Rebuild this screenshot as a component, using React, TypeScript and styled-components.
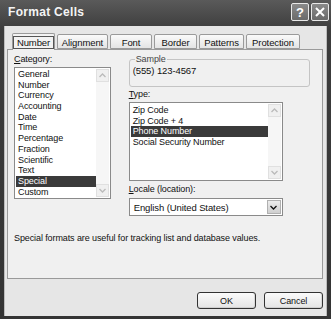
import styled, { createGlobalStyle } from 'styled-components';

const Global = createGlobalStyle`
	html, body {
		margin: 0;
		padding: 0;
		background: #3a3a3a;
	}
	body {
		font-family: "Liberation Sans", Arial, sans-serif;
		font-size: 9px;
		letter-spacing: -0.1px;
		color: #111;
	}
`;

const Window = styled.div`
	width: 331px;
	height: 319px;
	box-sizing: border-box;
	background: linear-gradient(#5a5a5a, #3c3c3c 30px, #343434);
	padding: 0 4px 3px 4px;
	display: flex;
	flex-direction: column;
`;

const TitleBar = styled.div`
	height: 26px;
	display: flex;
	align-items: center;
	justify-content: space-between;
	padding: 0 0 2px 4px;
	box-sizing: border-box;
`;

const Title = styled.span`
	color: #f4f4f4;
	font-weight: bold;
	font-size: 12px;
	letter-spacing: 0.3px;
`;

const TitleButtons = styled.div`
	display: flex;
	gap: 2px;
	margin-right: -2px;
`;

const TitleButton = styled.div`
	width: 16px;
	height: 16px;
	border: 1px solid #e8e8e8;
	border-radius: 2px;
	background: linear-gradient(#8a8a8a, #6a6a6a);
	color: #fff;
	font-weight: bold;
	font-size: 13px;
	display: flex;
	align-items: center;
	justify-content: center;
`;

const Body = styled.div`
	flex: 1;
	background: #e6e6e6;
	border-left: 1px solid #bcbcbc;
	border-right: 1px solid #bcbcbc;
	padding: 7px 3px 0 2px;
	display: flex;
	flex-direction: column;
`;

const Tabs = styled.div`
	display: flex;
	align-items: flex-end;
	padding-left: 5px;
	gap: 2px;
	height: 16px;
	position: relative;
	z-index: 1;
`;

const Tab = styled.div<{ $active?: boolean; $w: number }>`
	width: ${p => p.$w}px;
	height: ${p => (p.$active ? 17 : 15)}px;
	box-sizing: border-box;
	border: 1px solid #9a9a9a;
	border-bottom: ${p => (p.$active ? 'none' : '1px solid #9a9a9a')};
	background: ${p => (p.$active ? '#f2f2f2' : 'linear-gradient(#fafafa, #e4e4e4)')};
	border-radius: 2px 2px 0 0;
	display: flex;
	align-items: center;
	justify-content: center;
	padding-top: 1px;
	margin-bottom: ${p => (p.$active ? '-1px' : '0')};
	font-size: 9.5px;
`;

const Focus = styled.span`
	border: 1px solid #555;
	padding: 0 3px;
	line-height: 11px;
`;

const Panel = styled.div`
	height: 230px;
	box-sizing: border-box;
	border: 1px solid #9a9a9a;
	background: #f0f0f0;
	padding: 3px 0 0 6px;
	display: flex;
	flex-direction: column;
`;

const Columns = styled.div`
	display: flex;
	gap: 18px;
`;

const Column = styled.div<{ $w: number }>`
	width: ${p => p.$w}px;
	display: flex;
	flex-direction: column;
`;

const Label = styled.div<{ $gap?: number }>`
	line-height: 11px;
	margin-top: ${p => p.$gap ?? 0}px;
	margin-bottom: 2px;
	u {
		text-decoration: underline;
	}
`;

const ListBox = styled.div<{ $h: number; $w?: number }>`
	height: ${p => p.$h}px;
	width: ${p => (p.$w ? `${p.$w}px` : 'auto')};
	box-sizing: border-box;
	border: 1px solid #8a8a8a;
	background: #fff;
	display: flex;
	padding: 1px;
`;

const Items = styled.div<{ $top?: number }>`
	flex: 1;
	display: flex;
	flex-direction: column;
	padding-top: ${p => p.$top ?? 0}px;
`;

const Item = styled.div<{ $selected?: boolean }>`
	height: 10.7px;
	line-height: 10.7px;
	padding-left: 2px;
	background: ${p => (p.$selected ? '#3a3a3a' : 'transparent')};
	color: ${p => (p.$selected ? '#fff' : '#111')};
	white-space: nowrap;
`;

const ScrollTrack = styled.div`
	width: 13px;
	display: flex;
	flex-direction: column;
	justify-content: space-between;
	background: #f6f6f6;
`;

const ScrollArrow = styled.div`
	height: 13px;
	display: flex;
	align-items: center;
	justify-content: center;
	background: #f0f0f0;
	border: 1px solid #e0e0e0;
	box-sizing: border-box;
	color: #bbb;
`;

const Group = styled.fieldset`
	margin: 1px 12px 0 0;
	padding: 0 0 4px 3px;
	border: 1px solid #c4c4c4;
	border-radius: 3px;
	height: 33px;
	box-sizing: border-box;
	legend {
		padding: 0 1px;
		margin-left: 2px;
		color: #444;
		line-height: 10px;
	}
`;

const SampleText = styled.div`
	line-height: 12px;
	margin-top: 1px;
	font-size: 9.5px;
`;

const Select = styled.div`
	width: 154px;
	height: 18px;
	box-sizing: border-box;
	border: 1px solid #8a8a8a;
	background: #fff;
	display: flex;
	align-items: center;
	justify-content: space-between;
	padding: 0 1px 0 4px;
	margin-top: 1px;
	font-size: 9.5px;
`;

const SelectButton = styled.div`
	width: 14px;
	height: 14px;
	background: linear-gradient(#ececec, #cfcfcf);
	border: 1px solid #b0b0b0;
	box-sizing: border-box;
	display: flex;
	align-items: center;
	justify-content: center;
`;

const Description = styled.div`
	margin-top: 16px;
	line-height: 12px;
`;

const Footer = styled.div`
	display: flex;
	justify-content: flex-end;
	gap: 8px;
	padding: 13px 0 0;
`;

const Button = styled.div`
	width: 59px;
	height: 17px;
	box-sizing: border-box;
	border: 1px solid #333;
	border-radius: 3px;
	background: linear-gradient(#fbfbfb, #e4e4e4);
	box-shadow: inset 0 -1px 0 #cfcfcf, inset -1px 0 0 #d8d8d8;
	display: flex;
	align-items: center;
	justify-content: center;
`;

const Arrow = ({ up }: { up?: boolean }) => (
	<svg width="7" height="5" viewBox="0 0 7 5">
		<path d={up ? 'M0.5 4 L3.5 1 L6.5 4' : 'M0.5 1 L3.5 4 L6.5 1'} fill="none" stroke="currentColor" strokeWidth="1.3" />
	</svg>
);

const categories = ['General', 'Number', 'Currency', 'Accounting', 'Date', 'Time', 'Percentage', 'Fraction', 'Scientific', 'Text', 'Special', 'Custom'];
const types = ['Zip Code', 'Zip Code + 4', 'Phone Number', 'Social Security Number'];
const tabs: [string, number][] = [['Number', 43], ['Alignment', 51], ['Font', 42], ['Border', 43], ['Patterns', 45], ['Protection', 54]];

export default function App() {
	return <>
		<Global />
		<Window>
			<TitleBar>
				<Title>Format Cells</Title>
				<TitleButtons>
					<TitleButton>?</TitleButton>
					<TitleButton>
						<svg width="10" height="10" viewBox="0 0 10 10">
							<path d="M1 1 L9 9 M9 1 L1 9" stroke="#fff" strokeWidth="2" />
						</svg>
					</TitleButton>
				</TitleButtons>
			</TitleBar>
			<Body>
				<Tabs>
					{tabs.map(([name, w], i) =>
						<Tab key={name} $w={w} $active={i === 0}>
							{i === 0 ? <Focus>{name}</Focus> : name}
						</Tab>
					)}
				</Tabs>
				<Panel>
					<Columns>
						<Column $w={97}>
							<Label $gap={1}><u>C</u>ategory:</Label>
							<ListBox $h={132}>
								<Items>
									{categories.map(c => <Item key={c} $selected={c === 'Special'}>{c}</Item>)}
								</Items>
								<ScrollTrack>
									<ScrollArrow><Arrow up /></ScrollArrow>
									<ScrollArrow><Arrow /></ScrollArrow>
								</ScrollTrack>
							</ListBox>
						</Column>
						<Column $w={194}>
							<Group>
								<legend>Sample</legend>
								<SampleText>(555) 123-4567</SampleText>
							</Group>
							<Label $gap={2}><u>T</u>ype:</Label>
							<ListBox $h={79} $w={154}>
								<Items $top={1}>
									{types.map(t => <Item key={t} $selected={t === 'Phone Number'}>{t}</Item>)}
								</Items>
								<ScrollTrack>
									<ScrollArrow><Arrow up /></ScrollArrow>
									<ScrollArrow><Arrow /></ScrollArrow>
								</ScrollTrack>
							</ListBox>
							<Label $gap={3}><u>L</u>ocale (location):</Label>
							<Select>
								<span>English (United States)</span>
								<SelectButton><Arrow /></SelectButton>
							</Select>
						</Column>
					</Columns>
					<Description>Special formats are useful for tracking list and database values.</Description>
				</Panel>
				<Footer>
					<Button>OK</Button>
					<Button>Cancel</Button>
				</Footer>
			</Body>
		</Window>
	</>;
}
